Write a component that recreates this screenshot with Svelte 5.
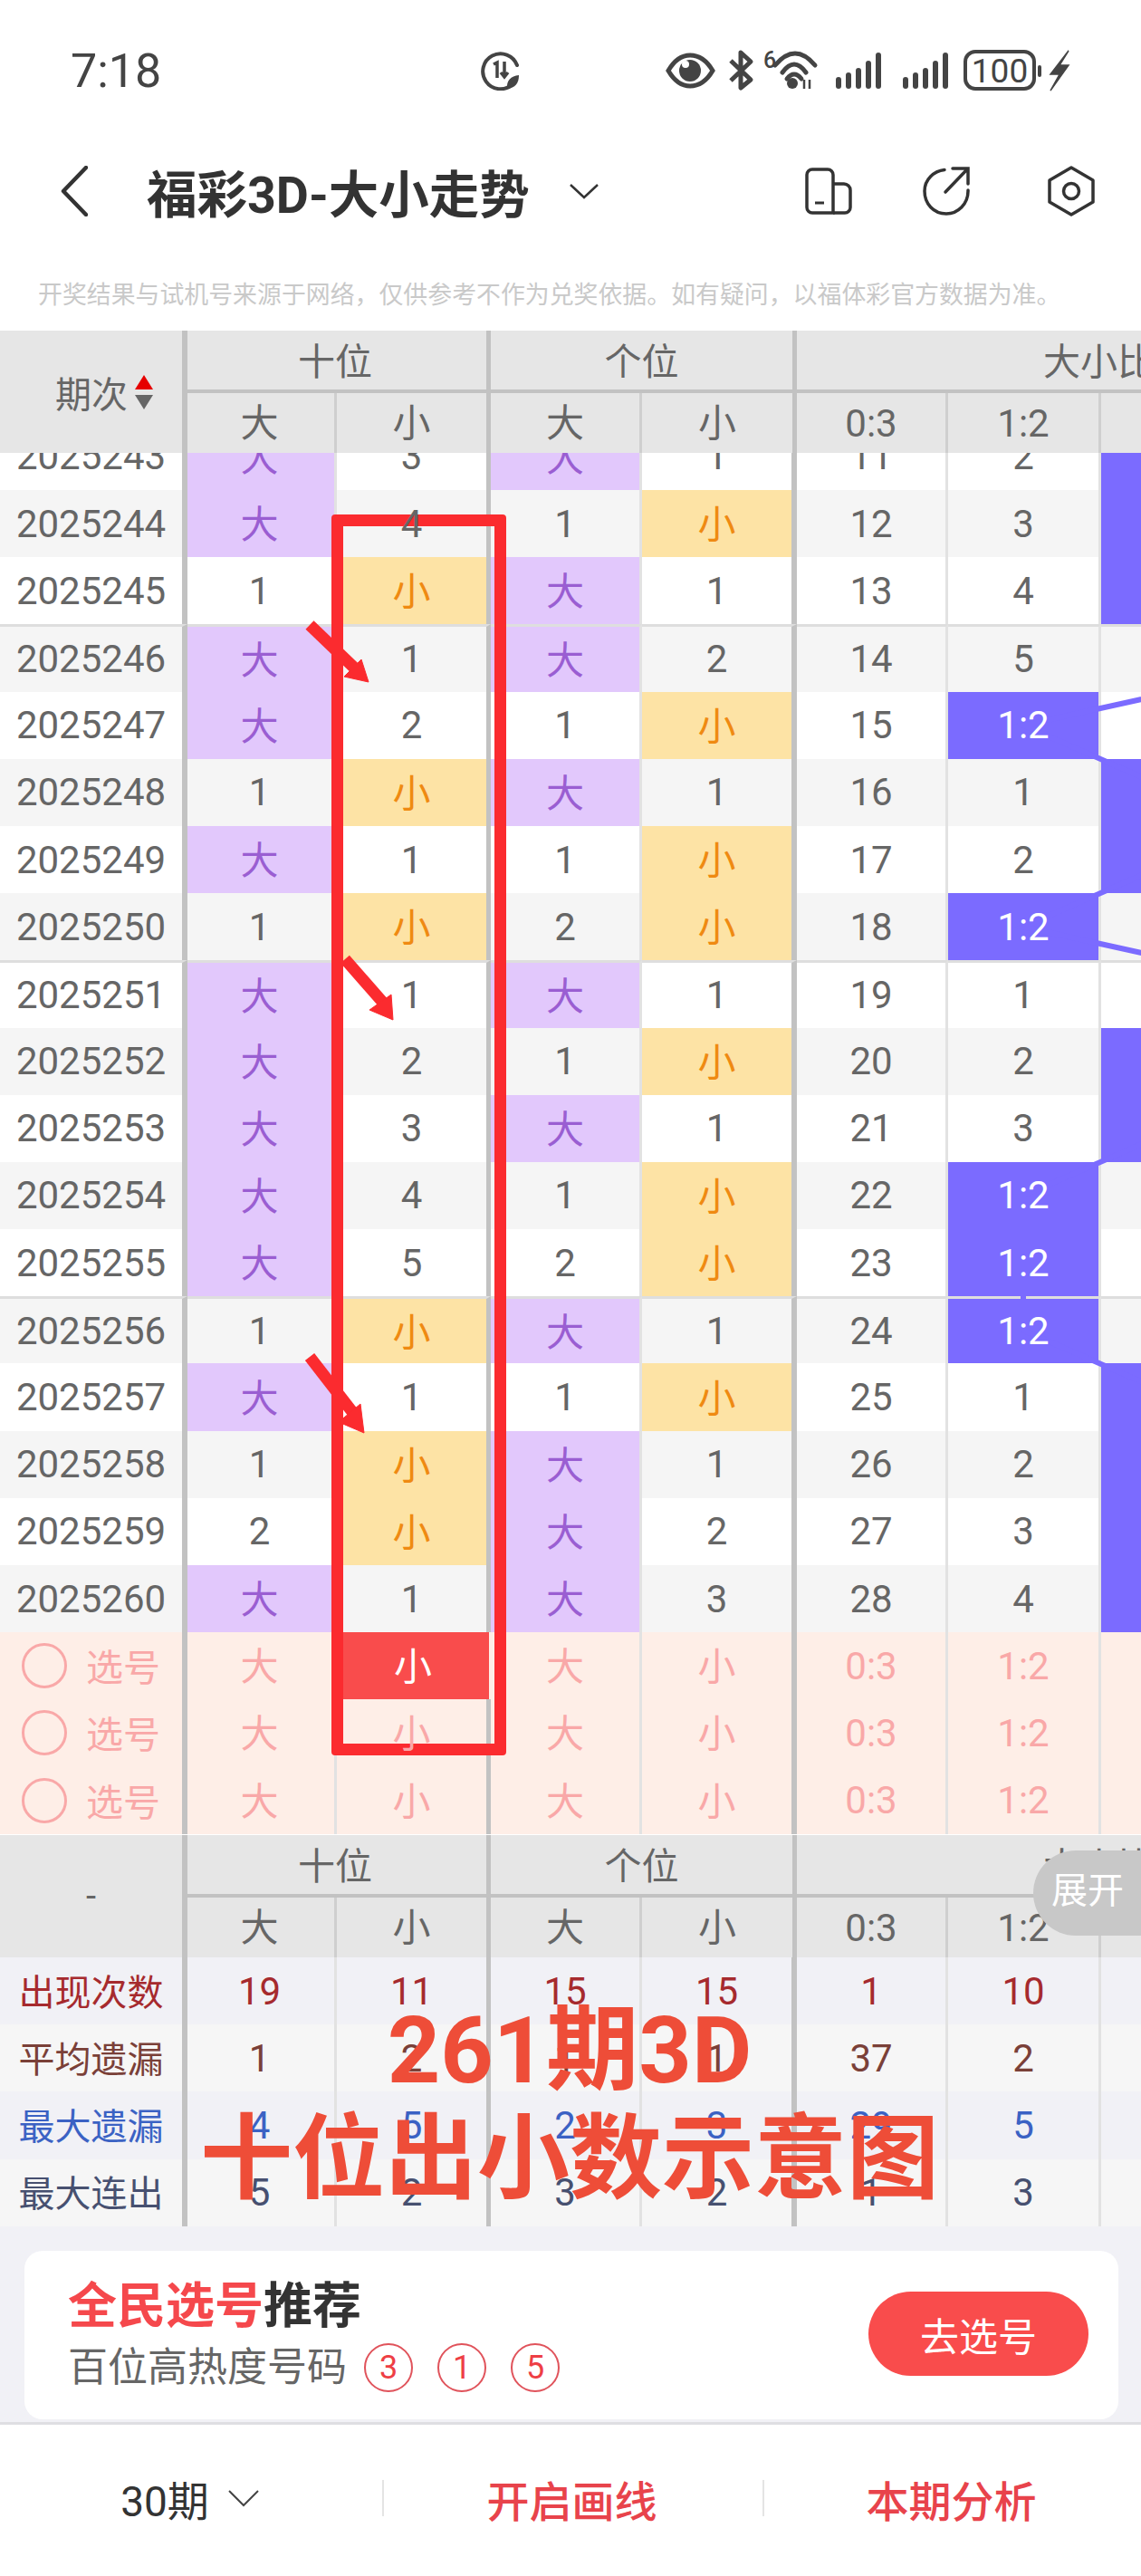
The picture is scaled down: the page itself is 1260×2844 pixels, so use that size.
<script>
	// [issue, 十位大, 十位小, 个位大, 个位小, 0:3, 1:2, trend column]
	// trend: 1 = 1:2, 2 = 2:1, 3 = 3:0
	const ROWS = [
		['2025243', '大', '3', '大', '1', '11', '2', 2],
		['2025244', '大', '4', '1', '小', '12', '3', 2],
		['2025245', '1', '小', '大', '1', '13', '4', 2],
		['2025246', '大', '1', '大', '2', '14', '5', 3],
		['2025247', '大', '2', '1', '小', '15', '1:2', 1],
		['2025248', '1', '小', '大', '1', '16', '1', 2],
		['2025249', '大', '1', '1', '小', '17', '2', 2],
		['2025250', '1', '小', '2', '小', '18', '1:2', 1],
		['2025251', '大', '1', '大', '1', '19', '1', 3],
		['2025252', '大', '2', '1', '小', '20', '2', 2],
		['2025253', '大', '3', '大', '1', '21', '3', 2],
		['2025254', '大', '4', '1', '小', '22', '1:2', 1],
		['2025255', '大', '5', '2', '小', '23', '1:2', 1],
		['2025256', '1', '小', '大', '1', '24', '1:2', 1],
		['2025257', '大', '1', '1', '小', '25', '1', 2],
		['2025258', '1', '小', '大', '1', '26', '2', 2],
		['2025259', '2', '小', '大', '2', '27', '3', 2],
		['2025260', '大', '1', '大', '3', '28', '4', 2]
	];
	const PICK = ['大', '小', '大', '小', '0:3', '1:2'];
	const STATS = [
		['出现次数', 'red', ['19', '11', '15', '15', '1', '10']],
		['平均遗漏', 'brown', ['1', '2', '1', '1', '37', '2']],
		['最大遗漏', 'blue', ['4', '5', '2', '3', '29', '5']],
		['最大连出', 'slate', ['5', '2', '3', '2', '1', '3']]
	];
	const ROW_H = 74.2;
	const SCROLLED = 33.2;
	const TREND_X = { 1: 1130, 2: 1300, 3: 1468 };

	const trend = ROWS.map((r, i) => `${TREND_X[r[7]]},${ROW_H * (i + 0.5) - SCROLLED}`).join(' ');

	function cellClass(v) {
		if (v === '大') return 'da';
		if (v === '小') return 'xiao';
		if (v === '1:2') return 'ratio';
		return '';
	}
</script>

{#snippet head(label)}
	<div class="grid head">
		<div class="corner">
			{#if label}
				<span>{label}</span>
				<span class="sort"><i class="up"></i><i class="down"></i></span>
			{:else}
				<span>-</span>
			{/if}
		</div>
		<div class="group two">十位</div>
		<div class="group two">个位</div>
		<div class="group four">大小比</div>
		<div class="sub cjk">大</div>
		<div class="sub cjk">小</div>
		<div class="sub cjk">大</div>
		<div class="sub cjk">小</div>
		<div class="sub">0:3</div>
		<div class="sub">1:2</div>
		<div class="sub">2:1</div>
		<div class="sub">3:0</div>
	</div>
{/snippet}

<div class="page">
	<div class="status">
		<span class="time">7:18</span>
		<svg class="saver" width="44" height="44" viewBox="530 56 44 44" fill="none" stroke="#444" stroke-width="4">
			<path d="M566 93A19.500 19.500 0 1 1 571 72" stroke-linecap="round" />
			<path d="M545 71l4-2v17M557 68v17M553 80l4 5 4-5" stroke-width="3.500" />
			<path d="M560 98c-1-9 4-14 13-15 0 9-4 14-13 15z" fill="#444" stroke="none" />
		</svg>
		<svg class="sysicons" width="448" height="48" viewBox="734 54 448 48" fill="none" stroke="#444" stroke-width="5">
			<path d="M738 78C745 66 754 61 762 61C771 61 780 66 787 78C780 90 771 95 762 95C754 95 745 90 738 78Z" />
			<circle cx="762" cy="78" r="12" fill="#444" stroke="none" />
			<circle cx="757" cy="71" r="4" fill="#fff" stroke="none" />

			<path d="M807 67L829 88L818 97V58L829 68L807 89" stroke-width="5" stroke-linejoin="round" />

			<text class="small" x="843" y="75" fill="#444" stroke="none">6</text>
			<path d="M856 72Q878 46 900 72M864 80Q877 62 890 80M869 87Q877 77 885 87" stroke-linecap="round" />
			<circle cx="875" cy="92" r="6" fill="#444" stroke="none" />
			<path d="M888 98V88M894 88V98" stroke-width="2.500" />

			<g fill="#444" stroke="none">
				<rect x="923" y="85" width="6" height="13" rx="3" />
				<rect x="934" y="80" width="6" height="18" rx="3" />
				<rect x="945" y="75" width="6" height="23" rx="3" />
				<rect x="956" y="67" width="6" height="31" rx="3" />
				<rect x="967" y="58" width="6" height="40" rx="3" />
				<rect x="997" y="85" width="6" height="13" rx="3" />
				<rect x="1008" y="80" width="6" height="18" rx="3" />
				<rect x="1019" y="75" width="6" height="23" rx="3" />
				<rect x="1030" y="67" width="6" height="31" rx="3" />
				<rect x="1041" y="58" width="6" height="40" rx="3" />
			</g>

			<rect x="1066" y="57" width="76" height="41" rx="11" stroke-width="4" />
			<text class="batt" x="1104" y="91" text-anchor="middle" fill="#444" stroke="none">100</text>
			<rect x="1146" y="72" width="4" height="13" rx="2" fill="#444" stroke="none" />
			<path d="M1180 56L1160 82L1170 82L1160 100L1180 72L1170 72Z" fill="#444" stroke="#444" stroke-width="1.500" />
		</svg>
	</div>

	<div class="nav">
		<svg class="back" width="30" height="56" viewBox="0 0 30 56" fill="none" stroke="#333" stroke-width="4.500">
			<path d="M28 2L3 28L28 54" stroke-linecap="round" stroke-linejoin="round" />
		</svg>
		<span class="title">福彩3D-大小走势</span>
		<svg class="caret" width="34" height="18" viewBox="0 0 34 18" fill="none" stroke="#333" stroke-width="2.500">
			<path d="M2 2L17 16L32 2" />
		</svg>
		<svg class="action first" width="52" height="52" viewBox="0 0 52 52" fill="none" stroke="#333" stroke-width="3.500">
			<path d="M8 2H25A6 6 0 0 1 31 8V50H8A6 6 0 0 1 2 44V8A6 6 0 0 1 8 2Z" />
			<path d="M31 18H43A7 7 0 0 1 50 25V44A6 6 0 0 1 44 50H31" />
			<path d="M11 39H21" stroke-width="3" />
		</svg>
		<svg class="action second" width="54" height="54" viewBox="0 0 54 54" fill="none" stroke="#333" stroke-width="3.500">
			<path d="M25 3.500C13 5 3 14 3 27C3 41 13 52 27 52C40 52 51 41 51 27V26" stroke-linecap="round" />
			<path d="M26 28L50 3M34 2H51V19" stroke-linecap="round" />
		</svg>
		<svg class="action third" width="52" height="56" viewBox="0 0 52 56" fill="none" stroke="#333" stroke-width="3.500">
			<path d="M26 2L50 16V40L26 54L2 40V16Z" stroke-linejoin="round" />
			<circle cx="26" cy="28" r="8.500" />
		</svg>
	</div>

	<p class="notice">开奖结果与试机号来源于网络，仅供参考不作为兑奖依据。如有疑问，以福体彩官方数据为准。</p>

	<div class="sheet">
		{@render head('期次')}

		<div class="body">
			<svg class="trend" width="1532" height="1526">
				<polyline points={trend} fill="none" stroke="#7b6bff" stroke-width="6" />
			</svg>
			<div class="rows" style="margin-top: -{SCROLLED}px">
				{#each ROWS as r, i}
					<div class="grid row" class:alt={i % 2 === 1} class:split={i === 3 || i === 8 || i === 13}>
						{#each r.slice(0, 7) as v}
							<div class={cellClass(v)}><span>{v}</span></div>
						{/each}
						<div class:ratio={r[7] === 2}></div>
						<div></div>
					</div>
				{/each}
				{#each [0, 1, 2] as n}
					<div class="grid row pick">
						<div class="picker"><i></i><span>选号</span></div>
						{#each PICK as v, c}
							<div class:cjk={c < 4} class:chosen={n === 0 && c === 1}><span>{v}</span></div>
						{/each}
						<div></div>
						<div></div>
					</div>
				{/each}
			</div>
		</div>

		{@render head('')}

		{#each STATS as [name, tone, vals], i}
			<div class="grid row stat {tone}" class:alt={i % 2 === 1}>
				<div class="name">{name}</div>
				{#each vals as v}
					<div>{v}</div>
				{/each}
				<div></div>
				<div></div>
			</div>
		{/each}
	</div>

	<div class="promo">
		<div class="card">
			<div class="info">
				<div class="headline"><em>全民选号</em>推荐</div>
				<div class="hot">
					百位高热度号码
					<span class="ball first-ball">3</span>
					<span class="ball">1</span>
					<span class="ball">5</span>
				</div>
			</div>
			<button class="go">去选号</button>
		</div>
	</div>

	<div class="bar">
		<div class="tab period">
			<span>30期</span>
			<svg width="36" height="20" viewBox="0 0 36 20" fill="none" stroke="#444" stroke-width="2">
				<path d="M2 2L18 18L34 2" />
			</svg>
		</div>
		<div class="tab link">开启画线</div>
		<div class="tab link">本期分析</div>
	</div>

	<div class="frame"></div>
	<svg class="marks" width="1260" height="2844" fill="#fb2b2f" stroke="#fb2b2f">
		<path d="M342 690L392 738" stroke-width="13" />
		<path d="M399 728L407 753L380 747Z" stroke-width="1" />
		<path d="M381 1059L424 1108" stroke-width="13" />
		<path d="M432 1098L434 1126L408 1115Z" stroke-width="1" />
		<path d="M342 1498L390 1560" stroke-width="13" />
		<path d="M398 1550L402 1582L374 1570Z" stroke-width="1" />
	</svg>
	<div class="caption">
		<span>261期3D</span>
		<span>十位出小数示意图</span>
	</div>
	<div class="expand">展开</div>
</div>

<style>
	:global(body) {
		margin: 0;
	}

	.page {
		position: relative;
		width: 1260px;
		height: 2844px;
		overflow: hidden;
		background: #fff;
		font-family: Roboto, 'Noto Sans CJK SC', sans-serif;
		color: #666;
	}

	.status {
		display: flex;
		align-items: center;
		height: 156px;
		padding-left: 78px;
		color: #444;
	}

	.time {
		width: 100px;
		font-size: 52px;
	}

	.saver {
		margin-left: 352px;
	}

	.sysicons {
		margin-left: 160px;
	}

	.small {
		font-size: 25px;
		font-family: Roboto, sans-serif;
		font-weight: 500;
	}

	.batt {
		font-size: 37px;
		font-family: Roboto, sans-serif;
	}

	.nav {
		display: flex;
		align-items: center;
		height: 110px;
		padding-left: 67px;
		color: #333;
	}

	.title {
		margin-left: 65px;
		font-size: 55.500px;
		font-weight: 700;
		white-space: nowrap;
		width: 426px;
	}

	.caret {
		margin-left: 40px;
	}

	.action.first {
		margin-left: 227px;
	}

	.action.second {
		margin-left: 77px;
	}

	.action.third {
		margin-left: 85px;
	}

	.notice {
		box-sizing: border-box;
		height: 99px;
		margin: 0;
		padding: 40px 0 0 42px;
		font-size: 26.900px;
		line-height: 40px;
		color: #c9c9c9;
		white-space: nowrap;
	}

	.sheet {
		width: 1260px;
		overflow: hidden;
		font-size: 42px;
	}

	.grid {
		display: grid;
		width: 1532px;
		grid-template-columns: 207px 165px 170px 167px 171px 167px 169px 168px 168px;
	}

	.head {
		grid-template-rows: 69px 66px;
		background: #e6e6e6;
	}

	.corner {
		grid-row: span 2;
		display: flex;
		align-items: center;
		justify-content: flex-end;
		gap: 8px;
		padding-right: 32px;
		border-right: 6px solid #c2c2c2;
		font-size: 40px;
	}

	.corner:has(span:only-child) {
		justify-content: center;
		padding-right: 0;
	}

	.sort {
		display: flex;
		flex-direction: column;
		gap: 6px;
	}

	.sort i {
		width: 0;
		height: 0;
		border-left: 10px solid transparent;
		border-right: 10px solid transparent;
	}

	.sort .up {
		border-bottom: 16px solid #e60000;
	}

	.sort .down {
		border-top: 16px solid #666;
	}

	.group {
		display: flex;
		align-items: center;
		justify-content: center;
		border-right: 5px solid #c2c2c2;
		border-bottom: 4px solid #c2c2c2;
		box-sizing: border-box;
		font-size: 41px;
		padding-bottom: 3px;
	}

	.group:nth-child(2) {
		padding-right: 4px;
	}

	.two {
		grid-column: span 2;
	}

	.four {
		grid-column: span 4;
	}

	.sub {
		box-sizing: border-box;
		display: flex;
		align-items: center;
		justify-content: center;
		border-right: 3px solid #cfcfcf;
	}

	.sub.cjk {
		padding-bottom: 8px;
	}

	.sub:nth-child(5) {
		padding-right: 3px;
	}

	.sub:nth-child(6),
	.sub:nth-child(8) {
		border-right: 5px solid #c2c2c2;
	}

	.body {
		position: relative;
		height: 1526px;
		overflow: hidden;
	}

	.trend {
		position: absolute;
		top: 0;
		left: 0;
		z-index: 1;
	}

	.row {
		height: 74.2px;
		background: #fff;
	}

	.row.alt {
		background: #f5f5f5;
	}

	.row > div {
		box-sizing: border-box;
		display: flex;
		align-items: center;
		justify-content: center;
		border-right: 3px solid #e2e2e2;
	}

	.row > div:nth-child(1) {
		border-right: 6px solid #c2c2c2;
	}

	.row > div:nth-child(2) {
		padding-right: 3px;
	}

	.row > div:nth-child(3) {
		border-right: 5px solid #c2c2c2;
	}

	.row > div:nth-child(5) {
		border-right: 6px solid #c2c2c2;
	}

	.row.split > div {
		border-top: 3px solid #dedede;
	}

	.row span {
		position: relative;
		z-index: 2;
	}

	.row > .da,
	.row > .xiao,
	.row > .cjk {
		padding-bottom: 5px;
	}

	.da {
		background: #e2c8fc;
		color: #9a5ed2;
	}

	.xiao {
		background: #fde3a5;
		color: #ef8a12;
	}

	.ratio {
		background: #7b6bff;
		color: #fff;
	}

	.pick {
		background: #feeee7;
		color: #f9a8a8;
	}

	.row.pick > div {
		border-right-color: #e2e2e2;
	}

	.row.pick > div:nth-child(1),
	.row.pick > div:nth-child(3),
	.row.pick > div:nth-child(5) {
		border-right-color: #c2c2c2;
	}

	.picker {
		gap: 21px;
		font-size: 41px;
	}

	.picker span {
		top: -1px;
	}

	.picker i {
		box-sizing: border-box;
		width: 50px;
		height: 50px;
		border: 3px solid #f9a8a8;
		border-radius: 50%;
	}

	.row.pick > .chosen {
		background: #f94c4c;
		color: #fff;
		border-right: 0;
		margin-right: 2px;
	}

	.stat {
		background: #f1f1f6;
	}

	.stat.alt {
		background: #f6f6f6;
	}

	.name {
		font-size: 40px;
		padding-bottom: 3px;
	}

	.red {
		color: #a62a2e;
	}

	.brown {
		color: #7a4038;
	}

	.blue {
		color: #3b62c4;
	}

	.slate {
		color: #475070;
	}

	.promo {
		box-sizing: border-box;
		height: 219px;
		padding: 27px 25px 0 27px;
		background: #f1f1f6;
		border-bottom: 3px solid #dedee2;
	}

	.card {
		box-sizing: border-box;
		display: flex;
		align-items: center;
		justify-content: space-between;
		height: 186px;
		padding: 0 33px 0 48px;
		border-radius: 20px;
		background: #fff;
	}

	.headline {
		font-size: 54px;
		line-height: 64px;
		font-weight: 700;
		color: #333;
	}

	.headline em {
		font-style: normal;
		color: #f5484c;
	}

	.hot {
		display: flex;
		align-items: center;
		gap: 27px;
		margin-top: 8px;
		font-size: 44px;
		line-height: 54px;
		white-space: nowrap;
	}

	.ball {
		box-sizing: border-box;
		display: flex;
		align-items: center;
		justify-content: center;
		width: 54px;
		height: 54px;
		border: 2px solid #e0535b;
		border-radius: 50%;
		font-size: 36px;
		color: #ee3f45;
	}

	.first-ball {
		margin-left: -8px;
	}

	.go {
		width: 243px;
		height: 93px;
		margin-bottom: 2px;
		border: 0;
		border-radius: 47px;
		background: #f94c4c;
		color: #fff;
		font: inherit;
		font-size: 43px;
	}

	.bar {
		display: grid;
		grid-template-columns: 422px 420px 418px;
		align-items: center;
		height: 163px;
	}

	.tab {
		display: flex;
		align-items: center;
		justify-content: center;
		height: 40px;
		font-size: 46px;
	}

	.tab + .tab {
		border-left: 2px solid #e4e4e4;
	}

	.period {
		gap: 20px;
		color: #333;
		padding-right: 2px;
	}

	.link {
		font-size: 47px;
		color: #e8434b;
		font-weight: 500;
		padding-right: 3px;
	}

	.frame {
		position: absolute;
		left: 366px;
		top: 568px;
		box-sizing: border-box;
		width: 193px;
		height: 1370px;
		border: 13px solid #fb2b2f;
		border-radius: 4px;
	}

	.marks {
		position: absolute;
		top: 0;
		left: 0;
	}

	.caption {
		position: absolute;
		left: 0;
		top: 2204px;
		width: 1258px;
		display: flex;
		flex-direction: column;
		align-items: center;
		font-size: 102px;
		line-height: 120px;
		font-weight: 700;
		color: #ee4d38;
		white-space: nowrap;
	}

	.expand {
		position: absolute;
		right: 0;
		top: 2043px;
		box-sizing: border-box;
		width: 119px;
		height: 94px;
		padding-left: 20px;
		border-radius: 47px 0 0 47px;
		background: #c8c8c8;
		color: #fff;
		font-size: 40px;
		line-height: 90px;
	}
</style>
